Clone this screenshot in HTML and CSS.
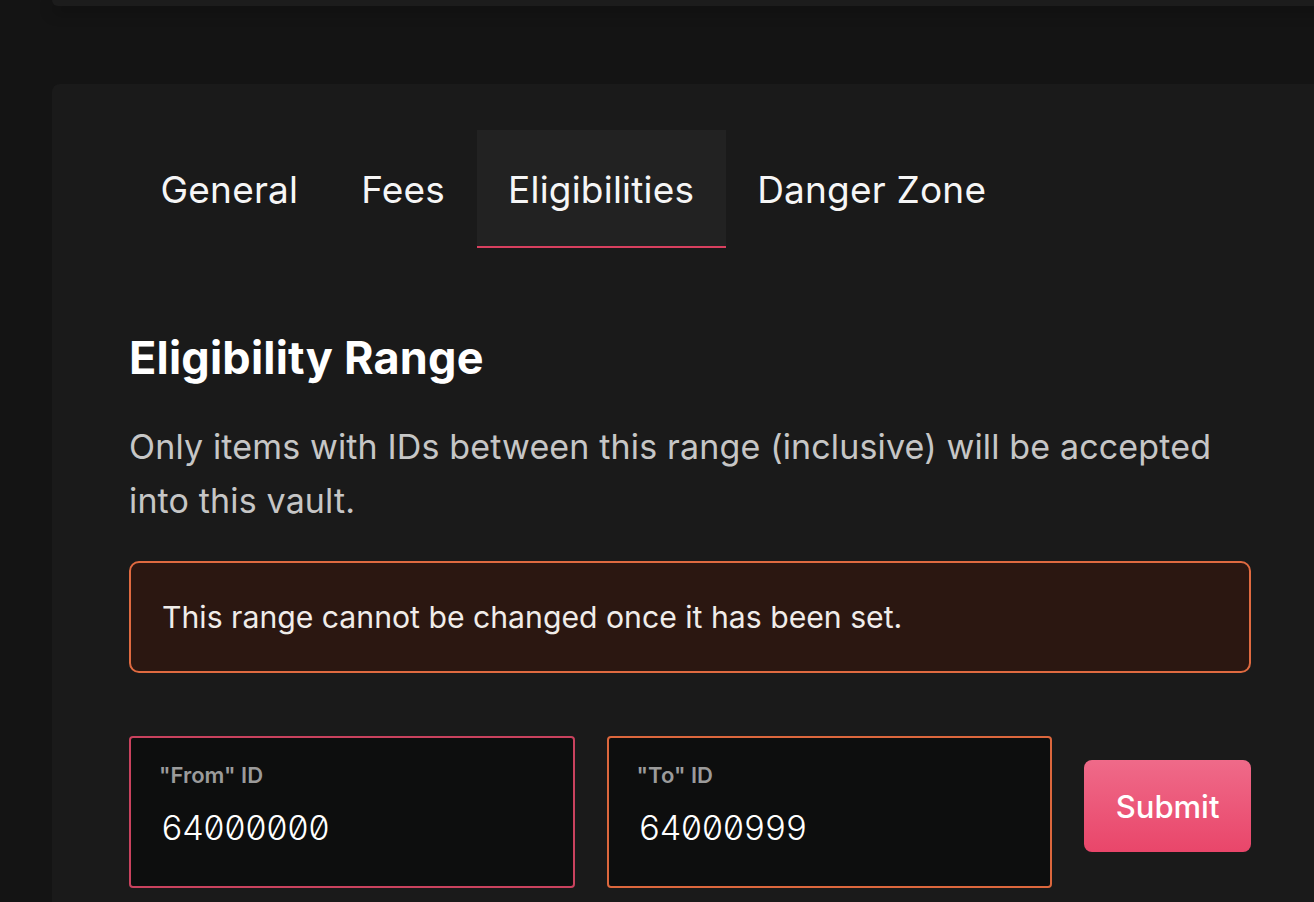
FILE: index.html
```html
<!DOCTYPE html>
<html lang="en">
<head>
<meta charset="utf-8">
<title>Vault settings</title>
<link rel="stylesheet" href="styles.css">
</head>
<body>
<div class="topcard"></div>
<main class="card">
  <nav class="tabs">
    <div class="tab">General</div>
    <div class="tab">Fees</div>
    <div class="tab active">Eligibilities</div>
    <div class="tab">Danger Zone</div>
  </nav>
  <section class="section">
    <h2 class="title">Eligibility Range</h2>
    <p class="desc">Only items with IDs between this range (inclusive) will be accepted into this vault.</p>
    <div class="warning">This range cannot be changed once it has been set.</div>
    <div class="form-row">
      <label class="field field-from">
        <span class="field-label">"From" ID</span>
        <span class="field-value">64000000</span>
      </label>
      <label class="field field-to">
        <span class="field-label">"To" ID</span>
        <span class="field-value">64000999</span>
      </label>
      <button class="submit">Submit</button>
    </div>
  </section>
</main>
</body>
</html>
```
FILE: styles.css
```css
html, body {
  margin: 0;
  padding: 0;
}
body {
  background: #141414;
  font-family: "Inter", "Noto Sans", sans-serif;
  color: #f4f4f4;
  overflow: hidden;
  width: 1314px;
  height: 902px;
}
.topcard {
  margin-left: 52px;
  width: 1300px;
  height: 6px;
  background: #1c1c1c;
  border-radius: 0 0 0 6px;
  box-shadow: 0 6px 14px rgba(0, 0, 0, 0.35);
}
.card {
  margin-top: 78px;
  margin-left: 52px;
  width: 1276px;
  box-sizing: border-box;
  padding: 46px 77px 40px;
  background: #1a1a1a;
  border-radius: 8px;
}
.tabs {
  display: flex;
  height: 118px;
}
.tab {
  display: flex;
  align-items: center;
  padding: 3px 31.5px 0;
  font-size: 37px;
  letter-spacing: 0.2px;
  font-weight: 400;
  color: #f6f6f6;
  box-sizing: border-box;
  border-bottom: 2px solid transparent;
}
.tab.active {
  background: #222222;
  border-bottom-color: #d9405f;
}
.section {
  padding-top: 84px;
}
.title {
  margin: 0;
  font-size: 45px;
  line-height: 52px;
  letter-spacing: 0.2px;
  font-weight: 700;
  color: #ffffff;
}
.desc {
  margin: 36px 0 0;
  font-size: 34px;
  line-height: 54px;
  letter-spacing: 0.15px;
  color: #c6c6c6;
}
.warning {
  margin-top: 33px;
  height: 112px;
  box-sizing: border-box;
  display: flex;
  align-items: center;
  padding: 0 31px;
  border: 2px solid #e06a40;
  border-radius: 10px;
  background: #2b1711;
  font-size: 30.2px;
  line-height: 40px;
  color: #f0ece9;
}
.form-row {
  margin-top: 63px;
  display: flex;
  gap: 32px;
  align-items: flex-start;
}
.field {
  width: 446px;
  height: 152px;
  box-sizing: border-box;
  padding: 23px 28px 0;
  display: flex;
  flex-direction: column;
  background: #0d0e0e;
  border: 2px solid;
  border-radius: 4px;
}
.field-from { border-color: #c9425e; }
.field-to { border-color: #dc673d; }
.field-label {
  font-size: 22px;
  line-height: 28px;
  font-weight: 600;
  color: #9b9b9b;
}
.field-value {
  margin-top: 19px;
  padding-left: 2px;
  font-family: "Inter", "DejaVu Sans Mono", monospace;
  font-feature-settings: "tnum" 1, "zero" 1;
  font-variant-numeric: tabular-nums slashed-zero;
  font-size: 34px;
  line-height: 40px;
  letter-spacing: -1px;
  font-weight: 300;
  color: #ffffff;
}
.submit {
  margin-top: 24px;
  width: 167px;
  height: 92px;
  border: none;
  border-radius: 8px;
  background: linear-gradient(180deg, #ef6a89 0%, #e9466a 100%);
  color: #ffffff;
  font-family: "Inter", "Noto Sans", sans-serif;
  font-size: 31px;
  font-weight: 500;
  cursor: pointer;
}
```
